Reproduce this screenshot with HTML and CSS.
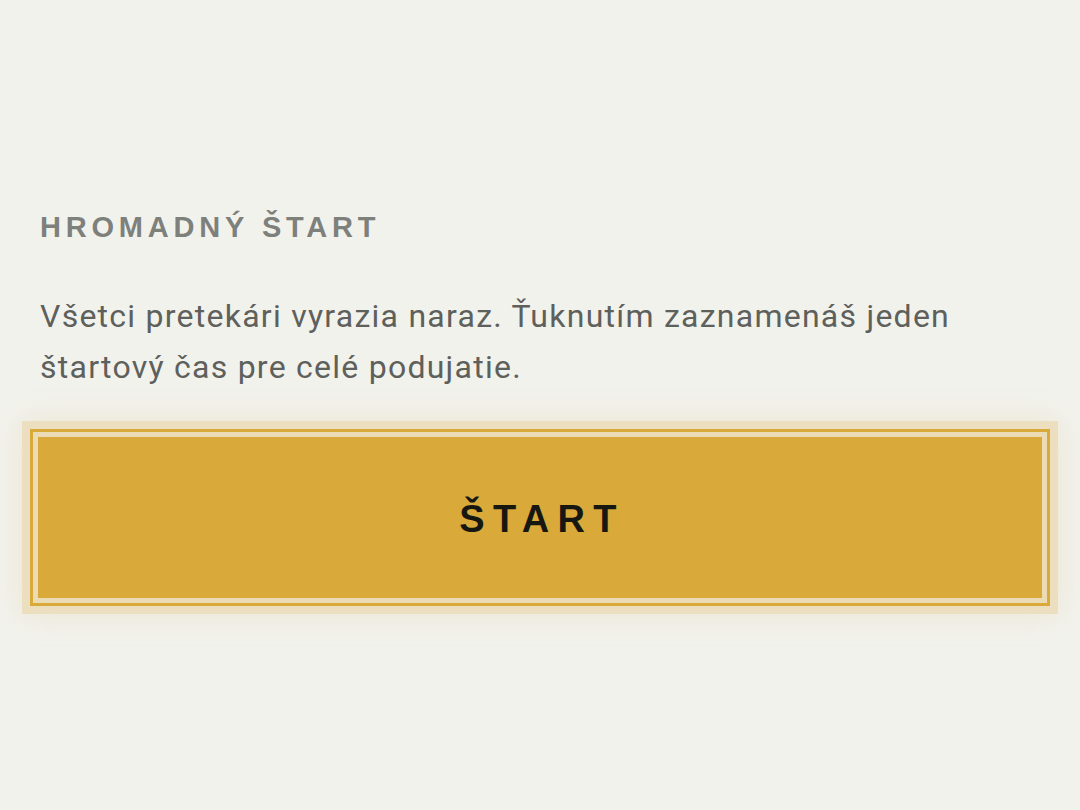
FILE: index.html
```html
<!DOCTYPE html>
<html lang="sk">
<head>
<meta charset="utf-8">
<title>Hromadný štart</title>
<link rel="stylesheet" href="styles.css">
</head>
<body>
<main class="panel">
  <h2 class="label">HROMADNÝ ŠTART</h2>
  <p class="desc">Všetci pretekári vyrazia naraz. Ťuknutím zaznamenáš jeden štartový čas pre celé podujatie.</p>
  <button class="start-btn" type="button">ŠTART</button>
</main>
</body>
</html>
```

FILE: styles.css
```css
html, body {
  margin: 0;
  padding: 0;
  background: #f2f2ed;
}
body {
  width: 1080px;
  height: 810px;
  overflow: hidden;
}
.panel {
  display: flex;
  flex-direction: column;
  padding: 210px 40px 0 40px;
}
.label {
  margin: 0;
  font-family: "Liberation Sans", Arial, sans-serif;
  font-weight: 700;
  font-size: 29px;
  line-height: 34px;
  letter-spacing: 0.165em;
  color: #7d807b;
}
.desc {
  margin: 47px 0 0 0;
  font-family: Roboto, "Noto Sans", sans-serif;
  font-weight: 400;
  font-size: 32px;
  line-height: 51px;
  letter-spacing: 1.25px;
  color: #5e605c;
}
.start-btn {
  margin: 36px -10px 0 -10px;
  height: 177px;
  background: #d9a93a;
  border: 3px solid #d9a93a;
  box-shadow: inset 0 0 0 5px #ecdcb6, 0 0 0 8px #ecdfc0, 0 0 28px 8px rgba(220, 190, 120, 0.25);
  font-family: "Liberation Sans", Arial, sans-serif;
  font-weight: 700;
  font-size: 38px;
  letter-spacing: 0.22em;
  color: #171712;
  padding: 4px 0 0 4px;
  cursor: pointer;
}
```
